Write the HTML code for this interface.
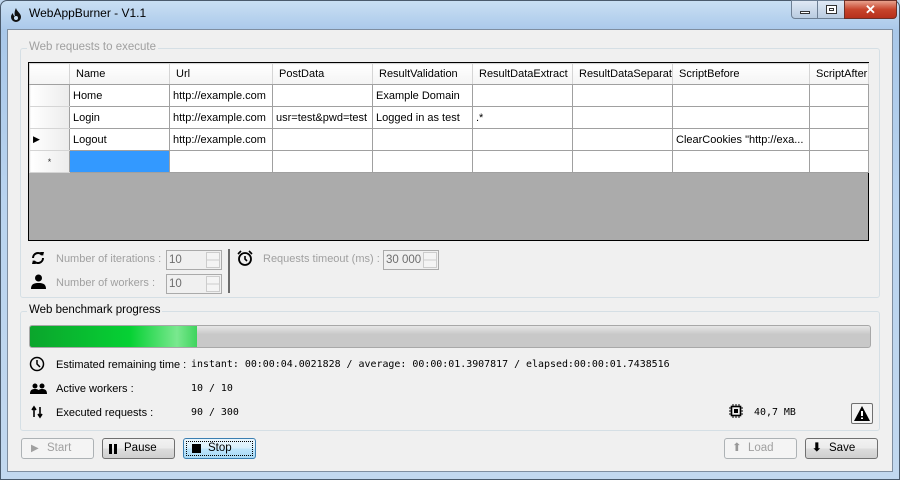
<!DOCTYPE html>
<html><head><meta charset="utf-8"><style>
*{box-sizing:border-box;margin:0;padding:0}
body{width:900px;height:480px;overflow:hidden;background:#bfd6ee;font-family:"Liberation Sans",sans-serif;font-size:11px;color:#000;position:relative}
.a{position:absolute}
.frame{left:0;top:0;width:900px;height:480px;background:linear-gradient(180deg,#c9dff3 0,#a9c8ea 30px,#b9d3ee 200px,#c2d8ef 480px);border:1px solid #4a5a6c;border-radius:7px 7px 0 0}
.client{left:7px;top:29px;width:886px;height:443px;background:#f0f0f0;border:1px solid #7f8ea0}
.grp{border:1px solid #d5dfe5;border-radius:3px}
.lgd{background:#f0f0f0;padding:0 2px;font-size:11.5px}
table{border-collapse:collapse;table-layout:fixed}
td{border:1px solid #a0a0a0;height:22px;padding:0 3px;white-space:nowrap;overflow:hidden;font-size:11px;background:#fff}
tr.h td{background:linear-gradient(#fff,#f4f4f4);border-color:#d5d5d5;border-bottom:1px solid #a0a0a0;height:21px;padding-left:6px}
td.rh{background:linear-gradient(90deg,#fff,#ececec);border-color:#d5d5d5;border-right:1px solid #a0a0a0}
.mono{font-family:"DejaVu Sans Mono","Liberation Mono",monospace;font-size:9.95px}
.btn{height:21px;border:1px solid #707070;border-radius:3px;background:linear-gradient(#f2f2f2 0,#ebebeb 50%,#dddddd 51%,#cfcfcf);font-size:11.5px;line-height:19px}
.dis{border-color:#adb2b5;background:#f4f4f4;color:#a0a0a0}
.nud{width:56px;height:20px;border:1px solid #aaa;background:#f0f0f0;color:#6d6d6d;font-size:11.5px;line-height:18px;padding-left:2px}
.nud i{position:absolute;right:1px;top:1px;width:14px;height:16px;border:1px solid #ccc;background:linear-gradient(#f4f4f4 48%,#ccc 48%,#ccc 52%,#f4f4f4 52%)}
.gray{color:#a0a0a0;font-size:11px}
.lbl{font-size:11px}
</style></head><body>
<div class="a frame"></div>
<svg class="a" style="left:9px;top:7px" width="14" height="16" viewBox="0 0 14 16"><path d="M7 1C8 5 12 6 12 10a5 5 0 0 1-10 0c0-2 1-3 2-4 0 2 1 3 2 3-1-3 0-6 1-8z" fill="#111"/><circle cx="7" cy="11" r="2" fill="#c9dff3"/></svg>
<div class="a" style="left:29px;top:6px;font-size:12px">WebAppBurner - V1.1</div>
<div class="a" style="left:791px;top:0;width:27px;height:19px;border:1px solid #6d7f94;border-radius:0 0 0 4px;background:linear-gradient(#dfe9f5,#b9cbe0)"><div class="a" style="left:8px;top:10px;width:10px;height:3px;background:#fff;border:1px solid #333"></div></div>
<div class="a" style="left:817px;top:0;width:28px;height:19px;border:1px solid #6d7f94;background:linear-gradient(#dfe9f5,#b9cbe0)"><div class="a" style="left:8px;top:4px;width:11px;height:9px;border:1px solid #333;background:#fff"><div style="margin:2px;height:3px;border:1px solid #333"></div></div></div>
<div class="a" style="left:844px;top:0;width:53px;height:19px;border:1px solid #6d3028;border-radius:0 0 4px 0;background:linear-gradient(#e8a08c,#c7442c 50%,#b6301c);color:#fff;font-weight:bold;font-size:13px;text-align:center;line-height:17px">✕</div>
<div class="a client"></div>

<div class="a grp" style="left:20px;top:48px;width:860px;height:250px"></div>
<div class="a lgd gray" style="left:27px;top:41px;font-size:11.5px">Web requests to execute</div>
<div class="a" style="left:28px;top:62px;width:841px;height:179px;background:#ababab;border:1px solid #000">
<table style="width:839px">
<colgroup><col style="width:40px"><col style="width:100px"><col style="width:103px"><col style="width:100px"><col style="width:100px"><col style="width:100px"><col style="width:100px"><col style="width:137px"><col style="width:59px"></colgroup>
<tr class="h"><td class="rh"></td><td>Name</td><td>Url</td><td>PostData</td><td>ResultValidation</td><td>ResultDataExtract</td><td>ResultDataSeparator</td><td>ScriptBefore</td><td>ScriptAfter</td></tr>
<tr><td class="rh"></td><td>Home</td><td>http://example.com</td><td></td><td>Example Domain</td><td></td><td></td><td></td><td></td></tr>
<tr><td class="rh"></td><td>Login</td><td>http://example.com</td><td>usr=test&amp;pwd=test</td><td>Logged in as test</td><td>.*</td><td></td><td></td><td></td></tr>
<tr><td class="rh" style="font-size:9px">▶</td><td>Logout</td><td>http://example.com</td><td></td><td></td><td></td><td></td><td>ClearCookies "http://exa...</td><td></td></tr>
<tr><td class="rh" style="text-align:center;font-size:9px;color:#333">*</td><td style="background:#3399ff"></td><td></td><td></td><td></td><td></td><td></td><td></td><td></td></tr>
</table></div>

<svg class="a" style="left:31px;top:250px" width="14" height="16" viewBox="0 0 14 16"><path d="M2 8a5 5 0 0 1 9-3M12 8a5 5 0 0 1-9 3" stroke="#000" stroke-width="2" fill="none"/><path d="M9 2l4 0-1 4zM5 14l-4 0 1-4z" fill="#000"/></svg>
<div class="a gray" style="left:56px;top:253px">Number of iterations :</div>
<div class="a nud" style="left:166px;top:250px">10<i></i></div>
<svg class="a" style="left:31px;top:274px" width="15" height="15" viewBox="0 0 15 15"><circle cx="7.5" cy="4" r="3.5" fill="#000"/><path d="M0 15c0-5 3-6 7.5-6s7.5 1 7.5 6z" fill="#000"/></svg>
<div class="a gray" style="left:56px;top:277px">Number of workers :</div>
<div class="a nud" style="left:166px;top:274px">10<i></i></div>
<div class="a" style="left:228px;top:249px;width:2px;height:44px;background:#6b6b6b"></div>
<svg class="a" style="left:237px;top:250px" width="16" height="16" viewBox="0 0 16 16"><circle cx="8" cy="9" r="6" stroke="#000" stroke-width="1.8" fill="none"/><path d="M8 6v3l2 2M1 4l3-3M15 4l-3-3" stroke="#000" stroke-width="1.6" fill="none"/></svg>
<div class="a gray" style="left:263px;top:253px">Requests timeout (ms) :</div>
<div class="a nud" style="left:383px;top:250px;width:56px">30 000<i></i></div>

<div class="a grp" style="left:20px;top:311px;width:860px;height:120px"></div>
<div class="a lgd" style="left:27px;top:304px">Web benchmark progress</div>
<div class="a" style="left:29px;top:325px;width:842px;height:23px;border:1px solid #a8a8a8;border-radius:3px;background:linear-gradient(#e6e6e6,#c8c8c8 40%,#c8c8c8);overflow:hidden"><div style="width:167px;height:100%;background:linear-gradient(90deg,#0ba52c,#06d134 60%,#7ae88f 88%,#3fd45d);"></div></div>

<svg class="a" style="left:29px;top:356px" width="16" height="16" viewBox="0 0 16 16"><circle cx="8" cy="8" r="6.5" stroke="#000" stroke-width="1.5" fill="none"/><path d="M8 4v4l3 3" stroke="#000" stroke-width="1.5" fill="none"/></svg>
<div class="a lbl" style="left:56px;top:359px">Estimated remaining time :</div>
<div class="a mono" style="left:191px;top:359px">instant: 00:00:04.0021828 / average: 00:00:01.3907817 / elapsed:00:00:01.7438516</div>
<svg class="a" style="left:30px;top:383px" width="17" height="12" viewBox="0 0 17 12"><circle cx="5" cy="3" r="2.5" fill="#000"/><circle cx="12" cy="3" r="2.5" fill="#000"/><path d="M0 11c0-4 2-5 5-5s5 1 5 5zM8 11c0-4 1-5 4-5s5 1 5 5z" fill="#000"/></svg>
<div class="a lbl" style="left:56px;top:383px">Active workers :</div>
<div class="a mono" style="left:191px;top:383px">10 / 10</div>
<svg class="a" style="left:31px;top:405px" width="12" height="14" viewBox="0 0 12 14"><path d="M3 12V3M1 5l2-3 2 3M9 2v9M7 9l2 3 2-3" stroke="#000" stroke-width="1.6" fill="none"/></svg>
<div class="a lbl" style="left:56px;top:407px">Executed requests :</div>
<div class="a mono" style="left:191px;top:407px">90 / 300</div>
<svg class="a" style="left:729px;top:404px" width="14" height="14" viewBox="0 0 14 14"><rect x="2.5" y="2.5" width="9" height="9" stroke="#000" stroke-width="1.6" fill="none"/><rect x="5" y="5" width="4" height="4" fill="#000"/><path d="M4 0v2M7 0v2M10 0v2M4 12v2M7 12v2M10 12v2M0 4h2M0 7h2M0 10h2M12 4h2M12 7h2M12 10h2" stroke="#000"/></svg>
<div class="a mono" style="left:754px;top:407px">40,7 MB</div>
<div class="a" style="left:851px;top:403px;width:22px;height:21px;border:1px solid #707070;border-radius:2px;background:#f4f4f4"><svg width="20" height="19" viewBox="0 0 20 19"><path d="M10 2L18 17H2z" fill="#000"/><path d="M10 7v5M10 13.5v1.5" stroke="#fff" stroke-width="2"/></svg></div>

<div class="a btn dis" style="left:21px;top:438px;width:73px"><span style="position:absolute;left:9px;font-size:10px">▶</span><span style="position:absolute;left:25px">Start</span></div>
<div class="a btn" style="left:102px;top:438px;width:73px"><span style="position:absolute;left:6px;top:5px;width:3px;height:10px;background:#000"></span><span style="position:absolute;left:11px;top:5px;width:3px;height:10px;background:#000"></span><span style="position:absolute;left:21px">Pause</span></div>
<div class="a btn" style="left:183px;top:438px;width:73px;border-color:#3c7fb1;background:linear-gradient(#eaf6fd,#d9f0fc 50%,#bee6fd 51%,#a7d9f5)"><div style="position:absolute;left:2px;top:2px;right:2px;bottom:2px;border:1px dotted #000"></div><span style="position:absolute;left:8px;top:5px;width:9px;height:9px;background:#000"></span><span style="position:absolute;left:24px">Stop</span></div>
<div class="a btn dis" style="left:724px;top:438px;width:73px"><span style="position:absolute;left:7px;color:#999">⬆</span><span style="position:absolute;left:23px">Load</span></div>
<div class="a btn" style="left:805px;top:438px;width:73px"><span style="position:absolute;left:6px;font-weight:bold">⬇</span><span style="position:absolute;left:23px">Save</span></div>
</body></html>
